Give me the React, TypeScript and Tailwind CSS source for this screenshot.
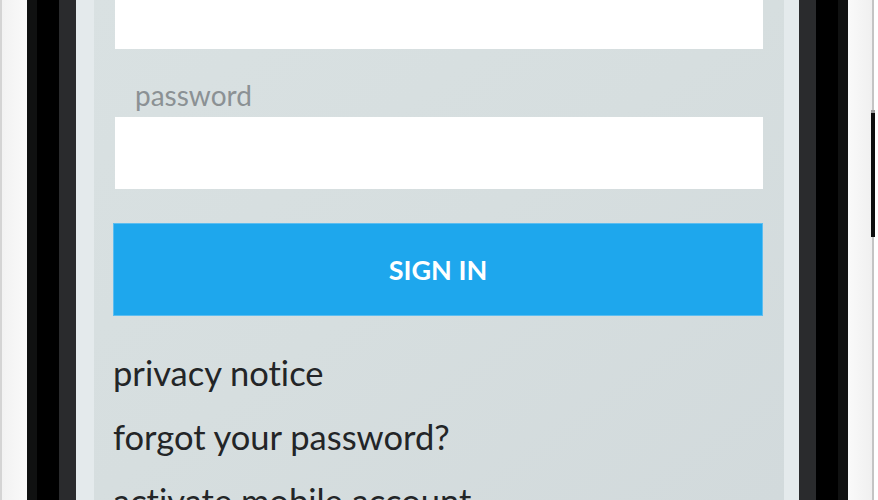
import React from "react";

export default function App() {
  return (
    <div className="relative flex h-[500px] w-[878px] overflow-hidden bg-white" style={{ fontFamily: "Lato, 'Open Sans', sans-serif" }}>
      {/* left frame */}
      <div className="w-[2px] bg-[#d4d4d4]" />
      <div className="w-[25px] bg-gradient-to-r from-[#f2f2f2] to-[#fafafa]" />
      <div className="w-[10px] bg-[#101111]" />
      <div className="w-[22px] bg-black" />
      <div className="w-[17px] bg-[#2a2b2d]" />
      <div className="w-[18px] bg-[#e4eaec]" />
      {/* screen */}
      <div className="flex-1 bg-gradient-to-br from-[#d9e1e2] via-[#d6dedf] to-[#d2dadc]">
        <div className="flex flex-col pl-[19px] pr-[21px]">
          <div className="ml-[2px] h-[49px] bg-white" />
          <div className="h-[68px] pl-[22px] pt-[31px] text-[28px] leading-[30px] text-[#8b9194]">password</div>
          <div className="ml-[2px] h-[72px] bg-white" />
          <button className="mt-[34px] flex h-[93px] items-center justify-center border border-[#5cbdf0] bg-[#1ea7ed] pt-[2px] text-[27px] font-bold text-white">
            SIGN IN
          </button>
          <div className="mt-[25px] flex flex-col text-[34.5px] font-normal leading-[64px] text-[#232527] [font-variant-ligatures:none]">
            <span>privacy notice</span>
            <span>forgot your password?</span>
            <span>activate mobile account</span>
          </div>
        </div>
      </div>
      {/* right frame */}
      <div className="w-[15px] bg-[#e4eaec]" />
      <div className="w-[17px] bg-[#2a2b2d]" />
      <div className="w-[22px] bg-black" />
      <div className="w-[10px] bg-[#101111]" />
      <div className="w-[24px] bg-gradient-to-r from-[#fafafa] to-[#f0f0f0]" />
      <div className="w-[2px] bg-[#c4c4c4]" />
      <div className="w-[4px] bg-white" />
      {/* side button */}
      <div className="absolute left-[871px] top-[110px] h-[127px] w-[4px] border-t-[3px] border-[#9a9a9a] bg-[#0e0e0e]" />
    </div>
  );
}
